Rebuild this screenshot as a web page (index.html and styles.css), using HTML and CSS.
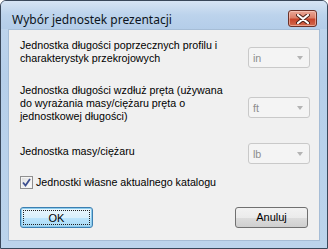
FILE: index.html
```html
<!DOCTYPE html>
<html lang="pl">
<head>
  <meta charset="UTF-8">
  <title>Wybór jednostek prezentacji</title>
  <link rel="stylesheet" href="styles.css">
</head>
<body>

  <div class="window">
    <div class="titlebar">
      <span class="title">Wybór jednostek prezentacji</span>
      <div class="close-btn">
        <svg width="14" height="10" viewBox="0 0 14 10">
          <path d="M2 1 L12 9 M12 1 L2 9" stroke="#4a2018" stroke-width="4" stroke-linecap="round"/>
          <path d="M2 1 L12 9 M12 1 L2 9" stroke="#ffffff" stroke-width="2.2" stroke-linecap="round"/>
        </svg>
      </div>
    </div>

    <div class="frame">
      <div class="client">

        <div class="row row-first">
          <div class="label">Jednostka długości poprzecznych profilu i<br>charakterystyk przekrojowych</div>
          <div class="combo combo-1"><span>in</span><i class="arrow"></i></div>
        </div>

        <div class="row row-second">
          <div class="label">Jednostka długości wzdłuż pręta (używana<br>do wyrażania masy/ciężaru pręta o<br>jednostkowej długości)</div>
          <div class="combo combo-2"><span>ft</span><i class="arrow"></i></div>
        </div>

        <div class="row row-third">
          <div class="label label-single">Jednostka masy/ciężaru</div>
          <div class="combo"><span>lb</span><i class="arrow"></i></div>
        </div>

        <div class="check-row">
          <div class="checkbox">
            <svg width="9" height="9" viewBox="0 0 9 9">
              <path d="M1 4.5 L3.5 7.5 L8 1" fill="none" stroke="#3d4f8f" stroke-width="1.8"/>
            </svg>
          </div>
          <span>Jednostki własne aktualnego katalogu</span>
        </div>

        <div class="button-row">
          <button class="btn btn-default"><span class="focus">OK</span></button>
          <button class="btn">Anuluj</button>
        </div>

      </div>
    </div>
  </div>

</body>
</html>
```

FILE: styles.css
```css
body {
  margin: 0;
  background-color: #ffffff;
}

.window {
  width: 328px;
  height: 249px;
  box-sizing: border-box;
  border: 1px solid #39475a;
  border-radius: 6px 6px 0 0;
  background: linear-gradient(to bottom, #c2d7ee, #b6cfea 30%, #bcd4ec);
  display: flex;
  flex-direction: column;
  overflow: hidden;
}

.titlebar {
  height: 29px;
  display: flex;
  align-items: flex-start;
  justify-content: space-between;
  padding: 0 10px 0 11px;
  background: linear-gradient(to bottom, #d6e4f4, #bcd3ec 50%, #b4cde9);
}

.title {
  font-family: "Noto Sans", sans-serif;
  font-size: 12px;
  color: #0c1420;
  margin-top: 10px;
  line-height: 17px;
}

.close-btn {
  width: 29px;
  height: 17px;
  margin-top: 9px;
  box-sizing: border-box;
  border: 1px solid #6b3128;
  border-radius: 3px;
  background: linear-gradient(to bottom, #eaa898, #dc7f69 45%, #c8432a 55%, #d26a4e);
  box-shadow: inset 0 0 0 1px rgba(255, 220, 210, 0.5);
  display: flex;
  align-items: center;
  justify-content: center;
}

.frame {
  flex: 1;
  padding: 0 7px 7px 7px;
  display: flex;
}

.client {
  flex: 1;
  background-color: #f0f0f0;
  border: 1px solid #a6bdd6;
  padding: 9px 9px 12px 11px;
  font-family: "Liberation Sans", Arial, sans-serif;
  font-size: 10.7px;
  color: #000;
  display: flex;
  flex-direction: column;
}

.row {
  display: flex;
  justify-content: space-between;
  align-items: flex-start;
}

.row-second {
  margin-top: 16px;
}

.row-third {
  margin-top: 20px;
}

.label {
  line-height: 13px;
}

.label-single {
  margin-top: 2px;
}

.combo {
  width: 62px;
  height: 21px;
  box-sizing: border-box;
  border: 1px solid #c9c9c9;
  border-radius: 3px;
  background-color: #f4f4f4;
  color: #8d8d8d;
  display: flex;
  align-items: center;
  justify-content: space-between;
  padding: 0 6px 0 4px;
}

.combo-1 {
  margin-top: 8px;
}

.combo-2 {
  margin-top: 13px;
}

.arrow {
  width: 0;
  height: 0;
  border-left: 3.5px solid transparent;
  border-right: 3.5px solid transparent;
  border-top: 4px solid #b4b4b4;
}

.check-row {
  margin-top: 12px;
  display: flex;
  align-items: center;
  gap: 3px;
  line-height: 13px;
}

.checkbox {
  width: 13px;
  height: 13px;
  box-sizing: border-box;
  border: 1px solid #8f8f8f;
  background: linear-gradient(135deg, #dcdcdc, #ffffff);
  box-shadow: inset 0 0 0 1px #f4f4f4;
  display: flex;
  align-items: center;
  justify-content: center;
}

.button-row {
  margin-top: 18px;
  display: flex;
  justify-content: space-between;
  padding-right: 2px;
}

.btn {
  width: 73px;
  height: 21px;
  box-sizing: border-box;
  border: 1px solid #707070;
  border-radius: 3px;
  background: linear-gradient(to bottom, #f2f2f2, #ebebeb 50%, #dddddd 50%, #cfcfcf);
  font-family: "Liberation Sans", Arial, sans-serif;
  font-size: 11px;
  color: #000;
  padding: 2px;
  display: flex;
  align-items: stretch;
  justify-content: center;
  line-height: 15px;
}

.btn-default {
  border-color: #3c7fb1;
  background: linear-gradient(to bottom, #eaf6fd, #d9f0fc 50%, #bee6fd 50%, #a7d9f5);
  box-shadow: inset 0 0 0 1px #8ccbec;
}

.focus {
  flex: 1;
  border: 1px dotted #202020;
  text-align: center;
}
```
